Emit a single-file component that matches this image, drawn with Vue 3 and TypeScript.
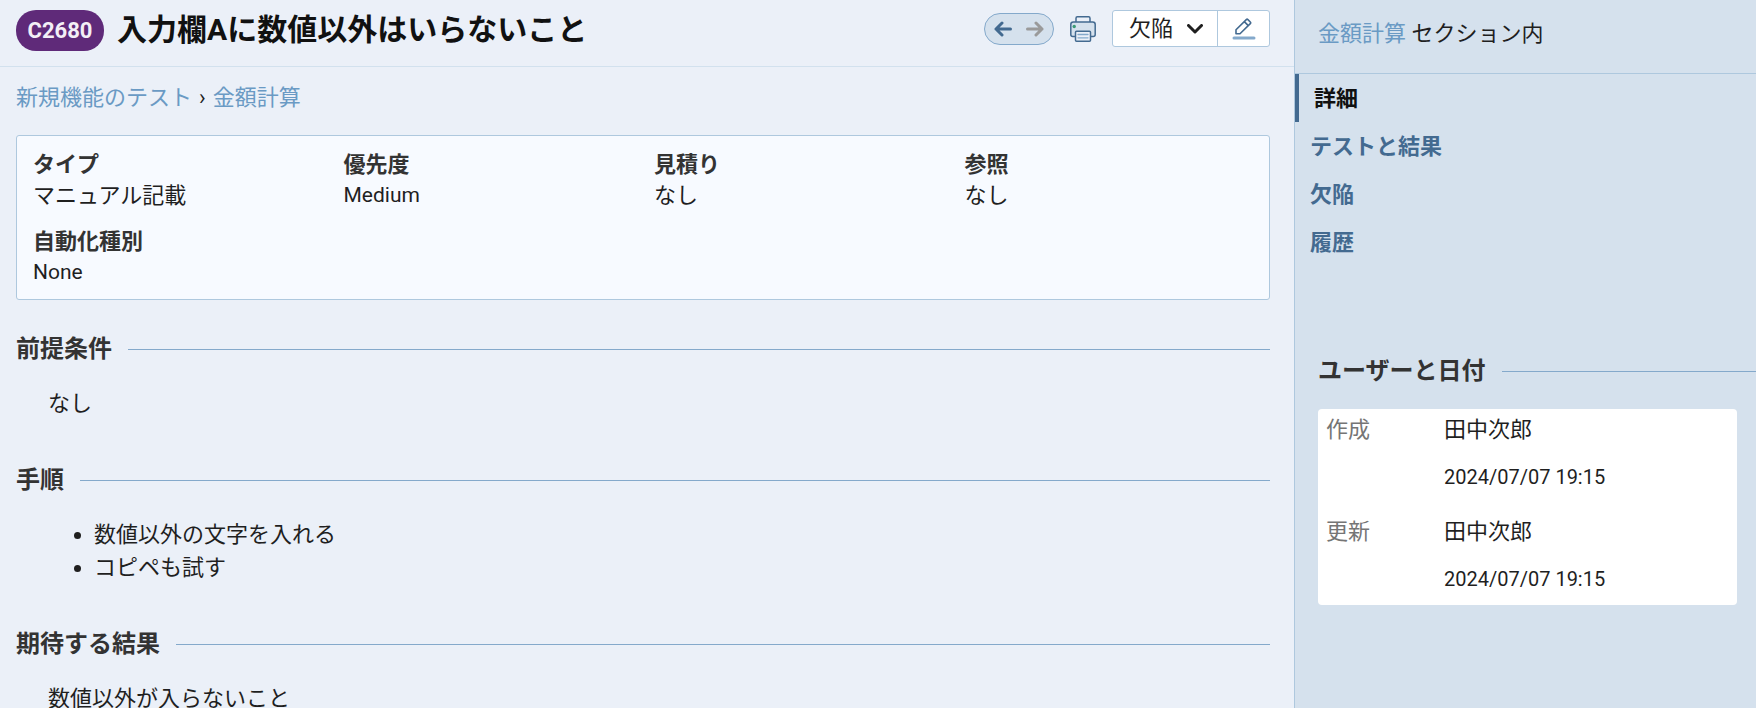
<script setup lang="ts">
import { ref } from 'vue'

interface Field {
  label: string
  value: string
}

interface Stamp {
  label: string
  user: string
  date: string
}

const fields: Field[] = [
  { label: 'タイプ', value: 'マニュアル記載' },
  { label: '優先度', value: 'Medium' },
  { label: '見積り', value: 'なし' },
  { label: '参照', value: 'なし' },
  { label: '自動化種別', value: 'None' },
]

const steps: string[] = ['数値以外の文字を入れる', 'コピペも試す']
const tabs: string[] = ['詳細', 'テストと結果', '欠陥', '履歴']
const activeTab = ref<string>('詳細')
const action = ref<string>('欠陥')

const stamps: Stamp[] = [
  { label: '作成', user: '田中次郎', date: '2024/07/07 19:15' },
  { label: '更新', user: '田中次郎', date: '2024/07/07 19:15' },
]

const isLatin = (text: string): boolean => /^[\x20-\x7e]+$/.test(text)
</script>

<template>
  <div class="page">
    <main class="main">
      <header class="header">
        <span class="badge">C2680</span>
        <h1 class="title">入力欄Aに数値以外はいらないこと</h1>
        <div class="tools">
          <div class="pager">
            <button type="button" class="icon-button" aria-label="前へ">
              <svg width="18" height="16" viewBox="0 0 18 16" class="arrow">
                <path d="M16.5 8H2M8 2L2 8l6 6" />
              </svg>
            </button>
            <button type="button" class="icon-button" aria-label="次へ">
              <svg width="18" height="16" viewBox="0 0 18 16" class="arrow muted">
                <path d="M1.5 8H16M10 2l6 6-6 6" />
              </svg>
            </button>
          </div>
          <button type="button" class="icon-button" aria-label="印刷">
            <svg width="26" height="26" viewBox="0 0 26 26" class="printer">
              <path d="M6 6V2.2Q6 .8 7.4 .8h11.2Q20 .8 20 2.2V6" />
              <path class="body" d="M5 20.5H2.8Q.8 20.5 .8 18.500V8.500Q.8 6 3.3 6h19.4Q25.2 6 25.2 8.500v10q0 2-2 2H21" />
              <rect class="paper" x="5.5" y="15.2" width="15" height="10" rx="1" />
              <path class="lines" d="M8 18.5h10M8 21.8h10" />
              <circle class="lamp" cx="4.2" cy="10.5" r="1.7" />
            </svg>
          </button>
          <div class="group">
            <div class="picker">
              <select v-model="action" class="select" aria-label="操作">
                <option value="欠陥">欠陥</option>
              </select>
              <svg width="16" height="10" viewBox="0 0 16 10" class="chevron">
                <path d="M1.5 1.5L8 8l6.5-6.5" />
              </svg>
            </div>
            <button type="button" class="edit" aria-label="編集">
              <svg width="24" height="22" viewBox="0 0 24 22" class="pencil">
                <path d="M4 11.8L14.3 1.6q.8-.8 1.6 0l2.4 2.4q.8.8 0 1.6L8 15.8H4zM12.3 3.6l4 4" />
                <path class="underline" d="M2 20h20" />
              </svg>
            </button>
          </div>
        </div>
      </header>

      <div class="content">
        <nav class="crumbs">
          <a href="#">新規機能のテスト</a>
          <span class="separator">›</span>
          <a href="#">金額計算</a>
        </nav>

        <dl class="fields">
          <div v-for="field in fields" :key="field.label">
            <dt>{{ field.label }}</dt>
            <dd :class="{ latin: isLatin(field.value) }">{{ field.value }}</dd>
          </div>
        </dl>

        <section class="section">
          <h2 class="heading">前提条件</h2>
          <p class="text">なし</p>
        </section>
        <section class="section">
          <h2 class="heading">手順</h2>
          <ul class="steps">
            <li v-for="step in steps" :key="step">{{ step }}</li>
          </ul>
        </section>
        <section class="section">
          <h2 class="heading">期待する結果</h2>
          <p class="text">数値以外が入らないこと</p>
        </section>
      </div>
    </main>

    <aside class="sidebar">
      <div class="sidebar-head"><a href="#">金額計算</a> セクション内</div>
      <nav class="tabs">
        <a
          v-for="tab in tabs"
          :key="tab"
          href="#"
          class="tab"
          :class="{ active: tab === activeTab }"
          @click.prevent="activeTab = tab"
        >{{ tab }}</a>
      </nav>
      <section class="people">
        <h2 class="heading">ユーザーと日付</h2>
        <table class="stamps">
          <tbody>
            <tr v-for="stamp in stamps" :key="stamp.label">
              <th scope="row">{{ stamp.label }}</th>
              <td>
                <div class="user">{{ stamp.user }}</div>
                <div class="date">{{ stamp.date }}</div>
              </td>
            </tr>
          </tbody>
        </table>
      </section>
    </aside>
  </div>
</template>

<style>
body {
  margin: 0;
}
</style>

<style scoped>
.page {
  display: grid;
  grid-template-columns: minmax(0, 1fr) 462px;
  height: 100vh;
  background: #ebf0f8;
  color: #1f1f1f;
  font-family: Roboto, "Noto Sans CJK JP", sans-serif;
  font-size: 22px;
  line-height: 33px;
}

.page * {
  box-sizing: border-box;
}

.main {
  overflow: auto;
  scrollbar-width: none;
}

a {
  color: #6a9ac4;
  text-decoration: none;
}

h1,
h2,
p,
ul,
dl,
dd {
  margin: 0;
}

button,
select {
  padding: 0;
  border: 0;
  background: none;
  color: inherit;
  font: inherit;
}

svg {
  display: block;
  fill: none;
  stroke-linecap: round;
  stroke-linejoin: round;
}

.header {
  display: flex;
  align-items: center;
  gap: 13px;
  height: 67px;
  padding: 0 24px 6px 16px;
  border-bottom: 1px solid #d2e1ee;
}

.badge {
  display: flex;
  align-items: center;
  justify-content: center;
  width: 88px;
  height: 41px;
  border-radius: 20px;
  background: #5f2a79;
  color: #f3eff6;
  font-weight: 700;
}

.title {
  flex: 1;
  color: #111;
  font-size: 30px;
  font-weight: 700;
  line-height: 40px;
  white-space: nowrap;
}

.tools {
  display: flex;
  align-items: center;
  gap: 16px;
  margin-bottom: 3px;
}

.pager {
  display: flex;
  align-items: center;
  justify-content: space-between;
  width: 70px;
  height: 32px;
  padding: 0 9px;
  border: 1px solid #84a9cb;
  border-radius: 16px;
  background: #d5e1ed;
}

.arrow {
  stroke: #436a90;
  stroke-width: 3;
}

.arrow.muted {
  stroke: #9a9a9a;
}

.printer {
  stroke: #436a90;
  stroke-width: 1.5;
}

.printer .body {
  fill: #d5e1ed;
}

.printer .paper {
  fill: #ebf0f8;
}

.printer .lines {
  stroke: #84a9cb;
  stroke-width: 1.3;
}

.printer .lamp {
  fill: #3b9a76;
  stroke: none;
}

.group {
  display: flex;
  height: 37px;
  border: 1px solid #aec8de;
  border-radius: 3px;
  background: #fff;
}

.picker {
  display: grid;
  align-items: center;
  width: 105px;
  border-right: 1px solid #aec8de;
}

.picker > * {
  grid-area: 1 / 1;
}

.select {
  width: 100%;
  height: 35px;
  padding-left: 16px;
  appearance: none;
}

.chevron {
  justify-self: end;
  margin-right: 14px;
  stroke: #1f1f1f;
  stroke-width: 3;
  pointer-events: none;
}

.edit {
  display: flex;
  align-items: center;
  justify-content: center;
  width: 51px;
}

.pencil {
  stroke: #436a90;
  stroke-width: 1.6;
}

.pencil .underline {
  stroke: #84a9cb;
  stroke-width: 3;
}

.content {
  padding: 14px 24px 0 16px;
}

.crumbs {
  display: flex;
  gap: 7px;
  margin-bottom: 21px;
}

.fields {
  display: grid;
  grid-template-columns: repeat(4, minmax(0, 1fr));
  gap: 15px 22px;
  margin-bottom: 31px;
  padding: 13px 16px 11px;
  border: 1px solid #aec8de;
  border-radius: 3px;
  background: #f7faff;
  line-height: 31px;
}

.fields dt {
  color: #333;
  font-weight: 700;
}

.fields .latin {
  font-size: 21px;
}

.section {
  margin-bottom: 42px;
}

.heading {
  display: flex;
  align-items: center;
  gap: 16px;
  margin-bottom: 20px;
  color: #333;
  font-size: 24px;
  font-weight: 700;
  line-height: 36px;
}

.heading::after {
  content: "";
  flex: 1;
  height: 1px;
  background: #84a9cb;
}

.text {
  padding-left: 32px;
}

.steps {
  padding-left: 78px;
}

.sidebar {
  overflow: hidden;
  border-left: 1px solid #aec8de;
  background: #d5e1ed;
}

.sidebar-head {
  height: 74px;
  padding: 17px 23px 0;
  border-bottom: 1px solid #aec8de;
}

.tab {
  display: block;
  padding: 2px 15px 0;
  color: #436a90;
  font-weight: 700;
  line-height: 46px;
}

.tab.active {
  border-left: 4px solid #436a90;
  color: #111;
}

.people {
  margin-top: 87px;
  padding-left: 23px;
}

.stamps {
  width: calc(100% - 19px);
  border-spacing: 0;
  border-radius: 4px;
  background: #fff;
}

.stamps th {
  width: 126px;
  padding: 0 8px;
  color: #757575;
  font-weight: 400;
  line-height: 42px;
  text-align: left;
  vertical-align: top;
}

.stamps td {
  padding: 0 0 14px;
}

.stamps tr:last-child td {
  padding-bottom: 6px;
}

.user {
  margin-bottom: 6px;
  line-height: 42px;
}

.date {
  font-size: 20px;
  line-height: 40px;
}
</style>
